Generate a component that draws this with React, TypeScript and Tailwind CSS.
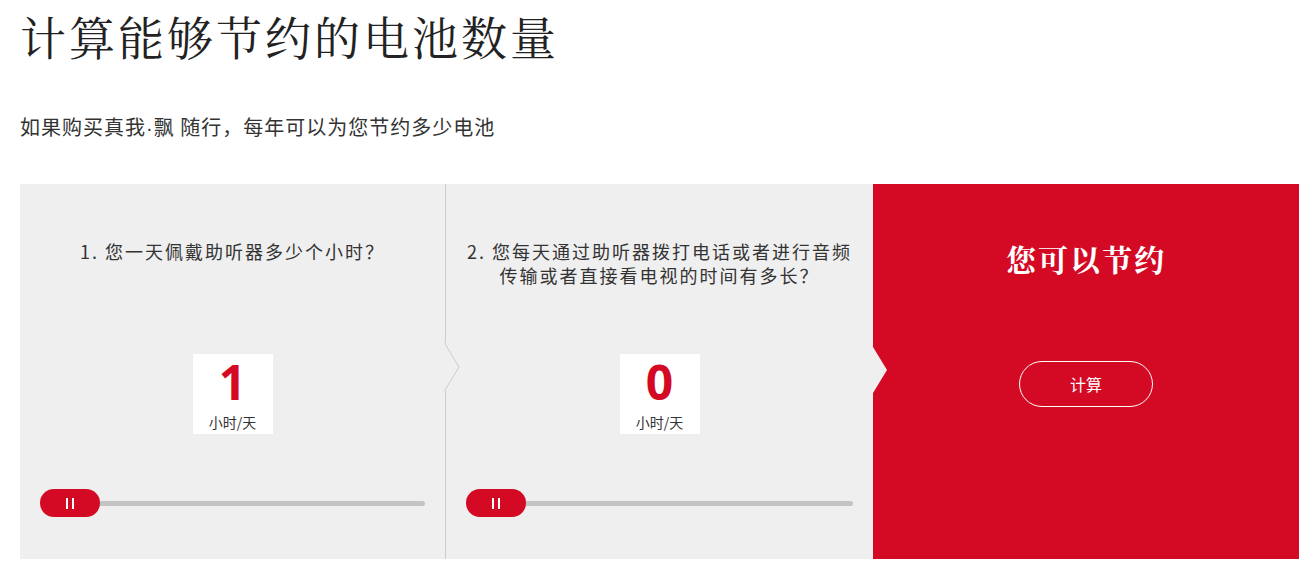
export default function App() {
  const cjk = { fontFamily: '"Microsoft YaHei", "Noto Sans CJK SC", sans-serif' }
  const serif = { fontFamily: '"Noto Serif CJK SC", "Liberation Serif", "Noto Sans CJK SC", serif' }

  return (
    <div className="w-[1308px] h-[566px] bg-white overflow-hidden" style={cjk}>
      <div className="px-[20px]">
        <h1 className="text-[46px] leading-[70px] text-[#222] font-normal tracking-[3px]" style={serif}>
          计算能够节约的电池数量
        </h1>
        <p className="mt-[47px] h-[20px] text-[20px] leading-[20px] tracking-[1px] text-[#333]">
          如果购买真我<span style={{ fontFamily: '"Liberation Sans", sans-serif' }}>·</span>飘 随行，每年可以为您节约多少电池
        </p>

        <div className="mt-[47px] flex h-[375px] w-[1279px]">
          {/* column 1 */}
          <div className="relative w-[426px] bg-[#efefef] border-r border-[#cccccc] flex flex-col items-center px-[20px] pt-[55px]">
            <p className="h-[48px] text-[18px] leading-[24px] tracking-[2px] text-[#333] text-center">1. 您一天佩戴助听器多少个小时？</p>
            <ValueBox value="1" />
            <Slider />
            <svg className="absolute right-[-16px] top-[159px]" width="17" height="48" viewBox="0 0 17 48">
              <rect x="0" y="0" width="2" height="48" fill="#efefef" />
              <polyline points="0.5,0 15,24 0.5,48" fill="#efefef" stroke="#cccccc" strokeWidth="1" />
            </svg>
          </div>

          {/* column 2 */}
          <div className="w-[427px] bg-[#efefef] flex flex-col items-center px-[20px] pt-[55px]">
            <p className="h-[48px] text-[18px] leading-[24px] tracking-[2px] text-[#333] text-center">
              2. 您每天通过助听器拨打电话或者进行音频
              <br />
              传输或者直接看电视的时间有多长？
            </p>
            <ValueBox value="0" />
            <Slider />
          </div>

          {/* result */}
          <div className="relative w-[426px] bg-[#d40a25] flex flex-col items-center pt-[54px]">
            <svg className="absolute left-0 top-[163px]" width="14" height="46" viewBox="0 0 14 46">
              <polygon points="0,0 14,23 0,46" fill="#efefef" />
            </svg>
            <h2 className="text-[30px] leading-[40px] font-bold text-white tracking-[2px]" style={serif}>您可以节约</h2>
            <button className="mt-[83px] w-[134px] h-[46px] rounded-full border border-white text-white text-[16px]">
              计算
            </button>
          </div>
        </div>
      </div>
    </div>
  )
}

function ValueBox({ value }: { value: string }) {
  return (
    <div className="mt-[67px] w-[80px] h-[80px] bg-white flex flex-col items-center">
      <span
        className="mt-[6px] h-[44px] text-[48px] leading-[44px] font-bold text-[#d40a25]"
        style={{ fontFamily: '"Open Sans", "Liberation Sans", sans-serif' }}
      >
        {value}
      </span>
      <span className="mt-[9px] text-[14px] leading-[18px] text-[#333]">小时/天</span>
    </div>
  )
}

function Slider() {
  return (
    <div className="relative mt-[55px] w-full h-[28px]">
      <div className="absolute left-0 right-0 top-[12px] h-[5px] rounded-full bg-[#c4c4c4]" />
      <div className="absolute left-0 top-0 w-[60px] h-[28px] rounded-full bg-[#d40a25] flex items-center justify-center gap-[4px]">
        <span className="w-[2px] h-[11px] bg-white" />
        <span className="w-[2px] h-[11px] bg-white" />
      </div>
    </div>
  )
}
